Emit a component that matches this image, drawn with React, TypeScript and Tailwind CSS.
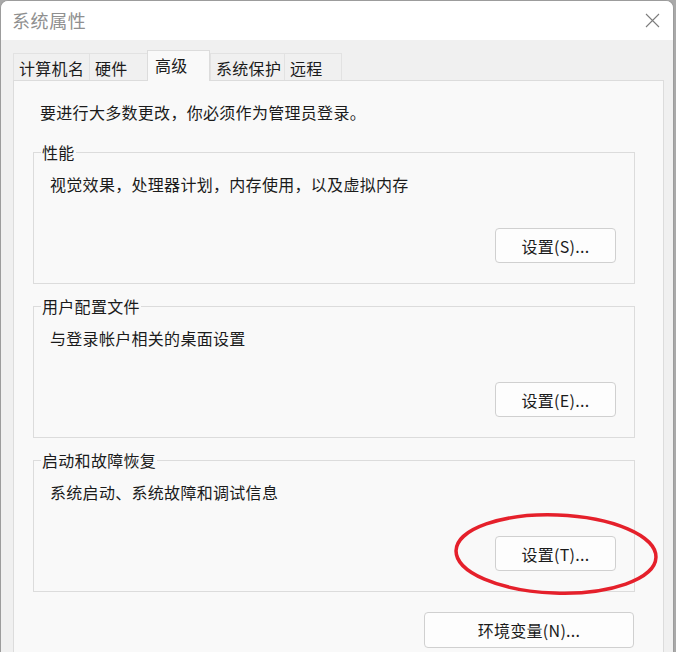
import React from "react";

const font = { fontFamily: '"Noto Sans CJK SC", "Noto Sans", sans-serif' };

const tabs = [
  { label: "计算机名", w: "w-[76px]" },
  { label: "硬件", w: "w-[58px]" },
  { label: "高级", w: "w-[63px]", active: true },
  { label: "系统保护", w: "w-[74px]" },
  { label: "远程", w: "w-[58px]" },
];

const groups = [
  { title: "性能", desc: "视觉效果，处理器计划，内存使用，以及虚拟内存", btn: "设置(S)..." },
  { title: "用户配置文件", desc: "与登录帐户相关的桌面设置", btn: "设置(E)..." },
  { title: "启动和故障恢复", desc: "系统启动、系统故障和调试信息", btn: "设置(T)..." },
];

const Button: React.FC<{ label: string; className?: string }> = ({ label, className = "" }) => (
  <button
    type="button"
    className={`rounded-[4px] border border-[#d0d0d0] bg-[#fdfdfd] text-[16px] tracking-[0.3px] text-[#1b1b1b] ${className}`}
  >
    {label}
  </button>
);

const App: React.FC = () => {
  return (
    <div className="relative h-[652px] w-[676px] overflow-hidden bg-[#a9a9a9] text-[#1b1b1b]" style={font}>
      <div className="h-[660px] w-[674px] rounded-t-[8px] border border-b-0 border-[#9c9c9c] bg-[#f0f0f0] overflow-hidden">
        {/* title bar */}
        <div className="flex h-[39px] items-center justify-between bg-white pl-[11px] pr-[13px]">
          <span className="text-[18px] tracking-[0.6px] text-[#8f8f8f]">系统属性</span>
          <svg width="15" height="15" viewBox="0 0 15 15" className="mb-[1px]">
            <path d="M1 1 L14 14 M14 1 L1 14" stroke="#7d7d7d" strokeWidth="1.1" fill="none" />
          </svg>
        </div>

        <div className="px-[12px] pt-[10px]">
          {/* tabs */}
          <div className="relative z-10 flex h-[30px] items-end">
            {tabs.map((t) =>
              t.active ? (
                <div
                  key={t.label}
                  className={`${t.w} -mb-[1px] h-[31px] border border-b-0 border-[#dcdcdc] bg-[#f9f9f9] pl-[7px] pt-[2px] text-[16px] leading-[24px] tracking-[0.3px]`}
                >
                  {t.label}
                </div>
              ) : (
                <div
                  key={t.label}
                  className={`${t.w} h-[27px] border border-b-0 border-r-0 border-[#e2e2e2] bg-[#f0f0f0] pl-[5px] pt-[2px] text-[16px] leading-[24px] tracking-[0.3px] last:border-r`}
                >
                  {t.label}
                </div>
              )
            )}
          </div>

          {/* panel */}
          <div className="h-[600px] w-[651px] border border-[#dcdcdc] bg-[#f9f9f9] pl-[19px]">
            <p className="ml-[7px] mt-[19px] text-[16px] leading-[24px] tracking-[0.3px]">要进行大多数更改，你必须作为管理员登录。</p>

            <div className="mt-[18px] flex w-[602px] flex-col gap-[12px]">
              {groups.map((g) => (
                <fieldset key={g.title} className="h-[142px] border border-[#dcdcdc] pl-[16px] pr-[18px]">
                  <legend className="-ml-[9px] px-[1px] text-[16px] leading-[20px] tracking-[0.3px]">{g.title}</legend>
                  <p className="mt-[10px] text-[16px] leading-[24px] tracking-[0.3px]">{g.desc}</p>
                  <div className="mt-[32px] flex justify-end">
                    <Button label={g.btn} className="h-[35px] w-[121px]" />
                  </div>
                </fieldset>
              ))}
            </div>

            <div className="mt-[20px] flex w-[602px] justify-end pr-[1px]">
              <Button label="环境变量(N)..." className="h-[36px] w-[210px]" />
            </div>
          </div>
        </div>
      </div>

      {/* red highlight ellipse */}
      <svg className="pointer-events-none absolute left-[450px] top-[508px]" width="214" height="92" viewBox="0 0 214 92">
        <ellipse cx="106" cy="46" rx="100" ry="39" fill="none" stroke="#e5202b" strokeWidth="3.5" transform="rotate(2 106 46)" />
      </svg>
    </div>
  );
};

export default App;
